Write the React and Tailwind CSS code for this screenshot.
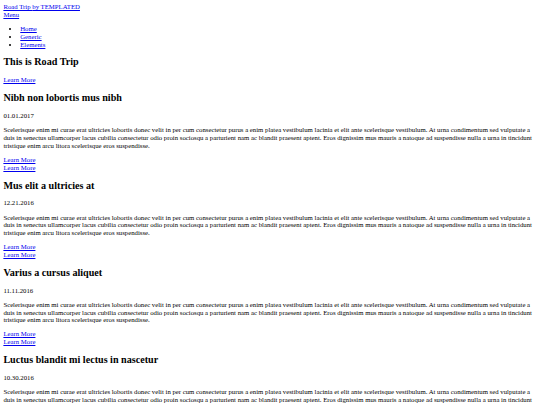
import React from 'react';

const posts = [
    { id: 'one', title: 'Nibh non lobortis mus nibh', date: '01.01.2017' },
    { id: 'two', title: 'Mus elit a ultricies at', date: '12.21.2016' },
    { id: 'three', title: 'Varius a cursus aliquet', date: '11.11.2016' },
    { id: 'four', title: 'Luctus blandit mi lectus in nascetur', date: '10.30.2016' },
];

const body = 'Scelerisque enim mi curae erat ultricies lobortis donec velit in per cum consectetur purus a enim platea vestibulum lacinia et elit ante scelerisque vestibulum. At urna condimentum sed vulputate a duis in senectus ullamcorper lacus cubilia consectetur odio proin sociosqu a parturient nam ac blandit praesent aptent. Eros dignissim mus mauris a natoque ad suspendisse nulla a urna in tincidunt tristique enim arcu litora scelerisque eros suspendisse.';

const link = 'text-[#0000ee] underline';

const App = () => {
    return (
        <div className="bg-white min-h-screen p-[3.375px] font-['Liberation_Serif','Times_New_Roman',serif] text-[6.75px] leading-[7.6px] text-black">
            {/* header */}
            <header>
                <div>
                    <a href="#" className={link}>Road Trip <span>by TEMPLATED</span></a>
                </div>
                <a href="#menu" className={link}>Menu</a>
            </header>

            <nav id="menu">
                <ul className="list-disc pl-[16.875px] my-[6.75px]">
                    <li><a href="#" className={link}>Home</a></li>
                    <li><a href="#" className={link}>Generic</a></li>
                    <li><a href="#" className={link}>Elements</a></li>
                </ul>
            </nav>

            <section id="banner">
                <div>
                    <h1 className="text-[10.125px] leading-[11.4px] font-bold my-[8.4px]">This is Road Trip</h1>
                    <a href="#one" className={link}>Learn More</a>
                </div>
            </section>

            {posts.map((post, idx) => (
                <section key={post.id} id={post.id}>
                    <div>
                        <article>
                            <header>
                                <h2 className="text-[10.125px] leading-[11.4px] font-bold my-[8.4px]">{post.title}</h2>
                                <p className="my-[6.75px]">{post.date}</p>
                            </header>
                            <div>
                                <p className="my-[6.75px]">{body}</p>
                            </div>
                            <footer>
                                <a href="#" className={link}>Learn More</a>
                            </footer>
                        </article>
                    </div>
                    {idx < posts.length - 1 && (
                        <a href="#" className={link}>Learn More</a>
                    )}
                </section>
            ))}
        </div>
    );
};

export default App;
